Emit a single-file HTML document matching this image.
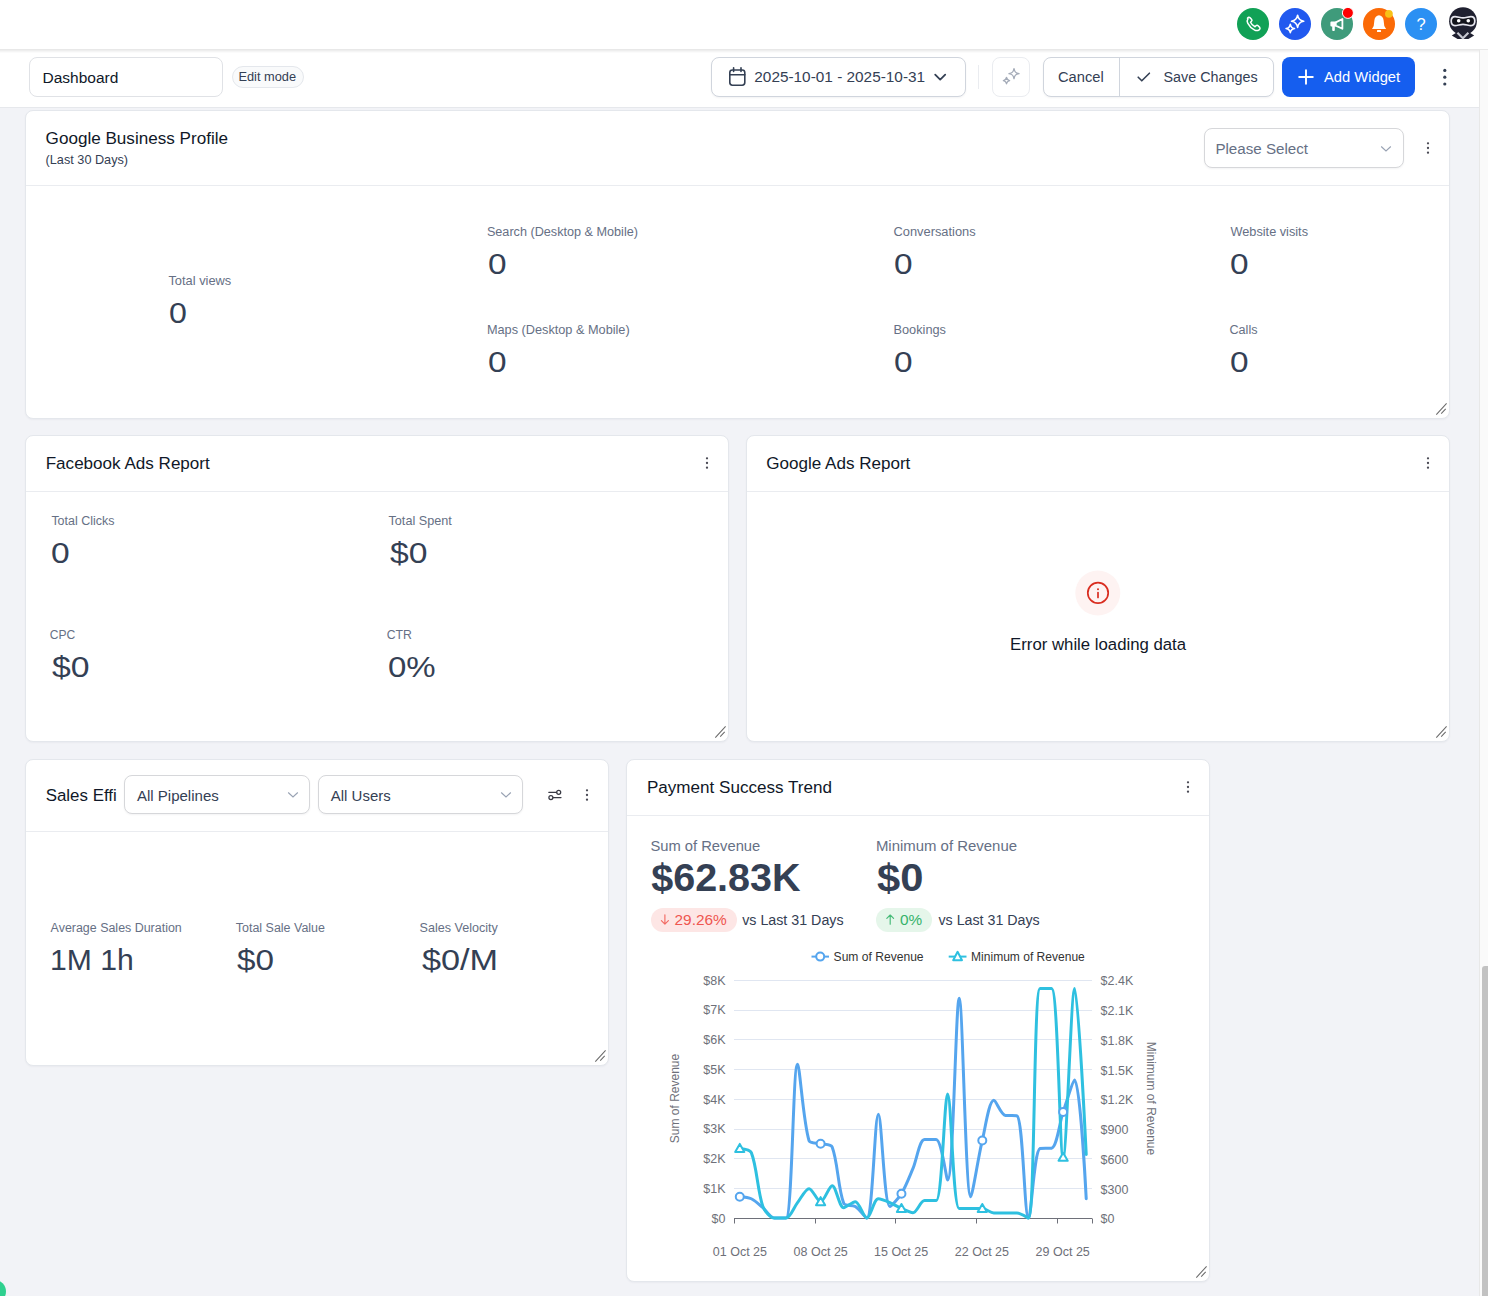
<!DOCTYPE html>
<html><head><meta charset="utf-8"><title>Dashboard</title>
<style>
html,body{margin:0;padding:0;}
body{width:1488px;height:1296px;overflow:hidden;position:relative;background:#f2f3f7;font-family:"Liberation Sans",sans-serif;}
.r{position:absolute;}
.t{position:absolute;white-space:nowrap;line-height:1;}
svg.r{overflow:visible;}
</style></head><body>
<div class="r" style="left:0px;top:0px;width:1488px;height:49px;background:#fff;"></div>
<div class="r" style="left:0px;top:49px;width:1488px;height:1px;background:#e8e8e8;"></div>
<div class="r" style="left:0px;top:50px;width:1479px;height:57px;background:#fff;"></div>
<div class="r" style="left:0px;top:50px;width:1479px;height:1px;background:#eeeeee;"></div>
<div class="r" style="left:0px;top:51px;width:1479px;height:1px;background:#f5f5f5;"></div>
<div class="r" style="left:0px;top:52px;width:1479px;height:1px;background:#fbfbfb;"></div>
<div class="r" style="left:0px;top:107px;width:1479px;height:1px;background:#e6e8ec;"></div>
<div class="r" style="left:1479px;top:50px;width:9px;height:1246px;background:#fafafa;border-left:1px solid #e8e8e8;box-sizing:border-box;"></div>
<div class="r" style="left:1482px;top:966px;width:6px;height:330px;background:#c2c2c2;border-radius:3px 0 0 0;"></div>
<div class="r" style="left:1237px;top:8px;width:32px;height:32px;border-radius:50%;background:#11a156;"></div>
<div class="r" style="left:1279px;top:8px;width:32px;height:32px;border-radius:50%;background:#2159ef;"></div>
<div class="r" style="left:1321px;top:8px;width:32px;height:32px;border-radius:50%;background:#3f9b7b;"></div>
<div class="r" style="left:1363px;top:8px;width:32px;height:32px;border-radius:50%;background:#fb6a07;"></div>
<div class="r" style="left:1405px;top:8px;width:32px;height:32px;border-radius:50%;background:#2b90f3;"></div>
<svg class="r" style="left:0;top:0" width="1488" height="50" viewBox="0 0 1488 50">
<path d="M1247.5,18.2c0.6-0.9 1.7-1.2 2.4-0.6l1.6,1.6c0.6,0.6 0.6,1.5 0,2.1l-1,1c0.9,1.9 2.5,3.6 4.5,4.5l1-1c0.6-0.6 1.5-0.6 2.1,0l1.6,1.6c0.6,0.7 0.3,1.8-0.6,2.4c-1.3,0.9-3,1-4.4,0.3c-3-1.5-5.5-4-7-7c-0.7-1.4-0.6-3.1 0.3-4.4z" fill="none" stroke="#fff" stroke-width="1.5" stroke-linejoin="round"/>
<path d="M1297.6,15.20 Q1298.45,20.45 1303.70,21.3 Q1298.45,22.15 1297.6,27.40 Q1296.75,22.15 1291.50,21.3 Q1296.75,20.45 1297.6,15.20Z" fill="none" stroke="#fff" stroke-width="1.6" stroke-linejoin="round"/>
<path d="M1290.3,24.30 Q1290.89,27.91 1294.50,28.5 Q1290.89,29.09 1290.3,32.70 Q1289.71,29.09 1286.10,28.5 Q1289.71,27.91 1290.3,24.30Z" fill="none" stroke="#fff" stroke-width="1.6" stroke-linejoin="round"/>
<path d="M1331.4,21.6 h4.4 v4.8 h-4.4 a1,1 0 0 1 -1,-1 v-2.8 a1,1 0 0 1 1,-1z" fill="#fff"/>
<path d="M1332.2,26 h2.6 v4 a0.9,0.9 0 0 1 -0.9,0.9 h-0.8 a0.9,0.9 0 0 1 -0.9,-0.9z" fill="#fff"/>
<path d="M1335.8,22.4 L1342.4,19 V28.8 L1335.8,25.6Z" fill="none" stroke="#fff" stroke-width="1.8" stroke-linejoin="round"/>
<circle cx="1347.9" cy="12.9" r="5.5" fill="#f00" stroke="#fff" stroke-width="1"/>
<path d="M1379,15.2 C1376.6,15.5 1374.7,17.4 1374.4,20.3 L1373.7,26 L1372,29.1 H1386.1 L1384.3,26 L1383.6,20.3 C1383.3,17.4 1381.4,15.5 1379,15.2Z" fill="#fff"/>
<rect x="1377" y="30.1" width="4" height="1.9" rx="0.6" fill="#fff"/>
<circle cx="1388.9" cy="13.8" r="3.9" fill="#f8c116"/>
<text x="1421" y="29.6" text-anchor="middle" font-family="Liberation Sans" font-weight="400" font-size="16.5" fill="#fff">?</text>
<circle cx="1463" cy="21.2" r="13.9" fill="#1f2030"/>
<path d="M1451.8,35.6 L1456.6,32.4 H1469.4 L1474.2,35.6 L1468.4,38.9 H1457.6Z" fill="#1f2030"/>
<path d="M1457.4,32.8 L1462.9,38.2 L1468.4,32.8" fill="none" stroke="#c5c6cf" stroke-width="2.2" stroke-linejoin="round"/>
<path d="M1455,16.6 C1457.6,16.6 1460.2,17.9 1463,17.9 C1465.8,17.9 1468.4,16.6 1471,16.6 C1473.6,16.6 1474.8,18.6 1474.8,21.1 C1474.8,23.6 1473.6,25.6 1471,25.6 C1468.4,25.6 1465.8,24.3 1463,24.3 C1460.2,24.3 1457.6,25.6 1455,25.6 C1452.4,25.6 1451.2,23.6 1451.2,21.1 C1451.2,18.6 1452.4,16.6 1455,16.6Z" fill="#12131b" stroke="#e6e6ee" stroke-width="1.7"/>
<circle cx="1458.7" cy="20.8" r="1.8" fill="#fff"/>
<circle cx="1468.3" cy="20.8" r="1.8" fill="#fff"/>
</svg>
<div class="r" style="left:29px;top:57px;width:194px;height:40px;border:1px solid #e0e2e6;border-radius:8px;box-sizing:border-box;background:#fff;"></div>
<div class="t" style="left:42.5px;top:70px;font-size:15.5px;color:#101828;">Dashboard</div>
<div class="r" style="left:232px;top:66px;width:72px;height:22px;border:1px solid #e4e7ec;border-radius:12px;box-sizing:border-box;background:#f9fafb;"></div>
<div class="t" style="left:238.4px;top:71px;font-size:12.8px;color:#344054;">Edit mode</div>
<div class="r" style="left:711px;top:57px;width:255px;height:40px;border:1px solid #d0d5dd;border-radius:8px;box-sizing:border-box;background:#fff;box-shadow:0 1px 2px rgba(16,24,40,.05);"></div>
<div class="t" style="left:754.3px;top:69px;font-size:15.36px;color:#344054;">2025-10-01 - 2025-10-31</div>
<div class="r" style="left:978px;top:65px;width:1px;height:24px;background:#eaecf0;"></div>
<div class="r" style="left:992px;top:57px;width:38px;height:40px;border:1px solid #eaecf0;border-radius:8px;box-sizing:border-box;background:#fff;"></div>
<div class="r" style="left:1043px;top:57px;width:231px;height:40px;border:1px solid #d0d5dd;border-radius:8px;box-sizing:border-box;background:#fff;box-shadow:0 1px 2px rgba(16,24,40,.05);"></div>
<div class="r" style="left:1119px;top:57px;width:1px;height:40px;background:#d0d5dd;"></div>
<div class="t" style="left:1058.0px;top:70px;font-size:14.69px;color:#344054;">Cancel</div>
<div class="t" style="left:1163.5px;top:70px;font-size:14.35px;color:#344054;">Save Changes</div>
<div class="r" style="left:1282px;top:57px;width:133px;height:40px;background:#155eef;border-radius:8px;"></div>
<div class="t" style="left:1324.0px;top:70px;font-size:14.73px;color:#ffffff;">Add Widget</div>
<svg class="r" style="left:0;top:50px" width="1488" height="57" viewBox="0 50 1488 57">
<rect x="729.8" y="70" width="15" height="15.2" rx="2.6" fill="none" stroke="#344054" stroke-width="1.6"/>
<path d="M729.8,74.8 h15 M733.6,67.8 v3.6 M741,67.8 v3.6" stroke="#344054" stroke-width="1.6" stroke-linecap="round"/>
<path d="M935.2,74.6 l5,5 l5,-5" fill="none" stroke="#344054" stroke-width="1.8" stroke-linecap="round" stroke-linejoin="round"/>
<path d="M1014,68.6 C1014.6,72 1015.6,73 1019,73.6 C1015.6,74.2 1014.6,75.2 1014,78.6 C1013.4,75.2 1012.4,74.2 1009,73.6 C1012.4,73 1013.4,72 1014,68.6Z" fill="none" stroke="#a4abb8" stroke-width="1.4" stroke-linejoin="round"/>
<path d="M1006.5,77.5 C1006.9,79.6 1007.5,80.2 1009.6,80.6 C1007.5,81 1006.9,81.6 1006.5,83.7 C1006.1,81.6 1005.5,81 1003.4,80.6 C1005.5,80.2 1006.1,79.6 1006.5,77.5Z" fill="none" stroke="#a4abb8" stroke-width="1.4" stroke-linejoin="round"/>
<path d="M1138.2,77.2 l3.6,3.6 l7.6,-7.6" fill="none" stroke="#344054" stroke-width="1.6" stroke-linecap="round" stroke-linejoin="round"/>
<path d="M1306,70.2 v13.6 M1299.2,77 h13.6" stroke="#fff" stroke-width="1.9" stroke-linecap="round"/>
<circle cx="1444.8" cy="70.4" r="1.6" fill="#344054"/><circle cx="1444.8" cy="77.2" r="1.6" fill="#344054"/><circle cx="1444.8" cy="84" r="1.6" fill="#344054"/>
</svg>
<div class="r" style="left:25px;top:110px;width:1425px;height:309px;background:#fff;border:1px solid #e4e7ec;border-radius:8px;box-sizing:border-box;box-shadow:0 1px 2px rgba(16,24,40,.04);"></div>
<div class="r" style="left:26px;top:185px;width:1423px;height:1px;background:#eaecf0;"></div>
<svg class="r" style="left:1434px;top:403px" width="14" height="14" viewBox="0 0 14 14"><path d="M2.3,11.6 L12.6,0.3 M7.2,10.7 L11.7,5.9" stroke="#6b6b6b" stroke-width="1.05" /></svg>
<div class="t" style="left:45.6px;top:130px;font-size:17.1px;color:#101828;">Google Business Profile</div>
<div class="t" style="left:45.6px;top:154px;font-size:12.7px;color:#344054;">(Last 30 Days)</div>
<div class="r" style="left:1204px;top:128px;width:200px;height:40px;border:1px solid #d6d7da;border-radius:8px;box-sizing:border-box;background:#fff;box-shadow:0 1px 2px rgba(16,24,40,.05);"></div>
<div class="t" style="left:1215.4px;top:141px;font-size:15.17px;color:#667085;">Please Select</div>
<svg class="r" style="left:1380.3px;top:144.5px" width="12" height="8" viewBox="0 0 12 8"><path d="M1.2,1.5 L6,6 L10.8,1.5" fill="none" stroke="#98a2b3" stroke-width="1.1"/></svg>
<svg class="r" style="left:1423.7px;top:138.3px" width="8" height="20" viewBox="0 0 8 20"><circle cx="4" cy="5.35" r="1.15" fill="#4a4a55"/><circle cx="4" cy="10.00" r="1.15" fill="#4a4a55"/><circle cx="4" cy="14.65" r="1.15" fill="#4a4a55"/></svg>
<div class="t" style="left:168.4px;top:275px;font-size:12.87px;color:#667085;">Total views</div>
<div class="t" style="left:168.8px;top:299px;font-size:29px;color:#344054;transform:scaleX(1.1071);transform-origin:0 0;">0</div>
<div class="t" style="left:486.9px;top:226px;font-size:12.65px;color:#667085;">Search (Desktop &amp; Mobile)</div>
<div class="t" style="left:487.6px;top:250px;font-size:29px;color:#344054;transform:scaleX(1.1500);transform-origin:0 0;">0</div>
<div class="t" style="left:486.9px;top:324px;font-size:12.72px;color:#667085;">Maps (Desktop &amp; Mobile)</div>
<div class="t" style="left:487.6px;top:348px;font-size:29px;color:#344054;transform:scaleX(1.1500);transform-origin:0 0;">0</div>
<div class="t" style="left:893.5px;top:226px;font-size:12.85px;color:#667085;">Conversations</div>
<div class="t" style="left:894.4px;top:250px;font-size:29px;color:#344054;transform:scaleX(1.1500);transform-origin:0 0;">0</div>
<div class="t" style="left:893.5px;top:324px;font-size:12.75px;color:#667085;">Bookings</div>
<div class="t" style="left:894.4px;top:348px;font-size:29px;color:#344054;transform:scaleX(1.1500);transform-origin:0 0;">0</div>
<div class="t" style="left:1230.5px;top:226px;font-size:12.72px;color:#667085;">Website visits</div>
<div class="t" style="left:1230.3px;top:250px;font-size:29px;color:#344054;transform:scaleX(1.1500);transform-origin:0 0;">0</div>
<div class="t" style="left:1229.5px;top:324px;font-size:12.62px;color:#667085;">Calls</div>
<div class="t" style="left:1230.3px;top:348px;font-size:29px;color:#344054;transform:scaleX(1.1500);transform-origin:0 0;">0</div>
<div class="r" style="left:25px;top:435px;width:704px;height:307px;background:#fff;border:1px solid #e4e7ec;border-radius:8px;box-sizing:border-box;box-shadow:0 1px 2px rgba(16,24,40,.04);"></div>
<div class="r" style="left:26px;top:491px;width:702px;height:1px;background:#eaecf0;"></div>
<svg class="r" style="left:713px;top:726px" width="14" height="14" viewBox="0 0 14 14"><path d="M2.3,11.6 L12.6,0.3 M7.2,10.7 L11.7,5.9" stroke="#6b6b6b" stroke-width="1.05" /></svg>
<div class="t" style="left:45.7px;top:455px;font-size:17.07px;color:#101828;">Facebook Ads Report</div>
<svg class="r" style="left:703px;top:453px" width="8" height="20" viewBox="0 0 8 20"><circle cx="4" cy="5.35" r="1.15" fill="#4a4a55"/><circle cx="4" cy="10.00" r="1.15" fill="#4a4a55"/><circle cx="4" cy="14.65" r="1.15" fill="#4a4a55"/></svg>
<div class="t" style="left:51.4px;top:515px;font-size:12.48px;color:#667085;">Total Clicks</div>
<div class="t" style="left:50.6px;top:539px;font-size:29px;color:#344054;transform:scaleX(1.1571);transform-origin:0 0;">0</div>
<div class="t" style="left:388.5px;top:515px;font-size:12.66px;color:#667085;">Total Spent</div>
<div class="t" style="left:389.5px;top:539px;font-size:29px;color:#344054;transform:scaleX(1.1613);transform-origin:0 0;">$0</div>
<div class="t" style="left:49.7px;top:629px;font-size:12.06px;color:#667085;">CPC</div>
<div class="t" style="left:51.9px;top:653px;font-size:29px;color:#344054;transform:scaleX(1.1645);transform-origin:0 0;">$0</div>
<div class="t" style="left:386.7px;top:629px;font-size:12.25px;color:#667085;">CTR</div>
<div class="t" style="left:388.0px;top:653px;font-size:29px;color:#344054;transform:scaleX(1.1375);transform-origin:0 0;">0%</div>
<div class="r" style="left:746px;top:435px;width:704px;height:307px;background:#fff;border:1px solid #e4e7ec;border-radius:8px;box-sizing:border-box;box-shadow:0 1px 2px rgba(16,24,40,.04);"></div>
<div class="r" style="left:747px;top:491px;width:702px;height:1px;background:#eaecf0;"></div>
<svg class="r" style="left:1434px;top:726px" width="14" height="14" viewBox="0 0 14 14"><path d="M2.3,11.6 L12.6,0.3 M7.2,10.7 L11.7,5.9" stroke="#6b6b6b" stroke-width="1.05" /></svg>
<div class="t" style="left:766.2px;top:455px;font-size:17.07px;color:#101828;">Google Ads Report</div>
<svg class="r" style="left:1424px;top:453px" width="8" height="20" viewBox="0 0 8 20"><circle cx="4" cy="5.35" r="1.15" fill="#4a4a55"/><circle cx="4" cy="10.00" r="1.15" fill="#4a4a55"/><circle cx="4" cy="14.65" r="1.15" fill="#4a4a55"/></svg>
<svg class="r" style="left:1070px;top:565px" width="56" height="56" viewBox="1070 565 56 56">
<circle cx="1097.8" cy="593" r="22.5" fill="#fef3f2"/>
<circle cx="1098" cy="592.9" r="10.2" fill="none" stroke="#d92d20" stroke-width="1.7"/>
<path d="M1098,592.6 v4.8" stroke="#d92d20" stroke-width="1.7" stroke-linecap="round"/>
<circle cx="1098" cy="589.2" r="1" fill="#d92d20"/>
</svg>
<div class="t" style="left:1010.1px;top:637px;font-size:16.75px;color:#101828;">Error while loading data</div>
<div class="r" style="left:25px;top:759px;width:584px;height:307px;background:#fff;border:1px solid #e4e7ec;border-radius:8px;box-sizing:border-box;box-shadow:0 1px 2px rgba(16,24,40,.04);"></div>
<div class="r" style="left:26px;top:831px;width:582px;height:1px;background:#eaecf0;"></div>
<svg class="r" style="left:593px;top:1050px" width="14" height="14" viewBox="0 0 14 14"><path d="M2.3,11.6 L12.6,0.3 M7.2,10.7 L11.7,5.9" stroke="#6b6b6b" stroke-width="1.05" /></svg>
<div class="t" style="left:45.7px;top:788px;font-size:16.9px;color:#101828;">Sales Effi</div>
<div class="r" style="left:124px;top:775px;width:186px;height:39px;border:1px solid #d6d7da;border-radius:8px;box-sizing:border-box;background:#fff;box-shadow:0 1px 2px rgba(16,24,40,.05);"></div>
<div class="t" style="left:136.9px;top:788px;font-size:15.04px;color:#344054;">All Pipelines</div>
<svg class="r" style="left:286.9px;top:791.3px" width="12" height="8" viewBox="0 0 12 8"><path d="M1.2,1.5 L6,6 L10.8,1.5" fill="none" stroke="#98a2b3" stroke-width="1.1"/></svg>
<div class="r" style="left:318px;top:775px;width:205px;height:39px;border:1px solid #d6d7da;border-radius:8px;box-sizing:border-box;background:#fff;box-shadow:0 1px 2px rgba(16,24,40,.05);"></div>
<div class="t" style="left:330.8px;top:788px;font-size:14.98px;color:#344054;">All Users</div>
<svg class="r" style="left:499.6px;top:791.3px" width="12" height="8" viewBox="0 0 12 8"><path d="M1.2,1.5 L6,6 L10.8,1.5" fill="none" stroke="#98a2b3" stroke-width="1.1"/></svg>
<svg class="r" style="left:545px;top:786px" width="20" height="18" viewBox="545 786 20 18">
<path d="M548.8,792.3 h7.8 M561,797.5 h-7.9" stroke="#3a3b45" stroke-width="1.25" stroke-linecap="round"/>
<circle cx="558.7" cy="792.3" r="2" fill="none" stroke="#3a3b45" stroke-width="1.25"/>
<circle cx="550.9" cy="797.5" r="2" fill="none" stroke="#3a3b45" stroke-width="1.25"/>
</svg>
<svg class="r" style="left:583.2px;top:785.2px" width="8" height="20" viewBox="0 0 8 20"><circle cx="4" cy="5.35" r="1.15" fill="#4a4a55"/><circle cx="4" cy="10.00" r="1.15" fill="#4a4a55"/><circle cx="4" cy="14.65" r="1.15" fill="#4a4a55"/></svg>
<div class="t" style="left:50.6px;top:922px;font-size:12.44px;color:#667085;">Average Sales Duration</div>
<div class="t" style="left:49.8px;top:946px;font-size:29px;color:#344054;transform:scaleX(1.0390);transform-origin:0 0;">1M 1h</div>
<div class="t" style="left:235.8px;top:922px;font-size:12.48px;color:#667085;">Total Sale Value</div>
<div class="t" style="left:236.8px;top:946px;font-size:29px;color:#344054;transform:scaleX(1.1452);transform-origin:0 0;">$0</div>
<div class="t" style="left:419.6px;top:922px;font-size:12.59px;color:#667085;">Sales Velocity</div>
<div class="t" style="left:421.6px;top:946px;font-size:29px;color:#344054;transform:scaleX(1.1806);transform-origin:0 0;">$0/M</div>
<div class="r" style="left:626px;top:759px;width:584px;height:523px;background:#fff;border:1px solid #e4e7ec;border-radius:8px;box-sizing:border-box;box-shadow:0 1px 2px rgba(16,24,40,.04);"></div>
<div class="r" style="left:627px;top:815px;width:582px;height:1px;background:#eaecf0;"></div>
<svg class="r" style="left:1194px;top:1266px" width="14" height="14" viewBox="0 0 14 14"><path d="M2.3,11.6 L12.6,0.3 M7.2,10.7 L11.7,5.9" stroke="#6b6b6b" stroke-width="1.05" /></svg>
<div class="t" style="left:646.9px;top:779px;font-size:17.09px;color:#101828;">Payment Success Trend</div>
<svg class="r" style="left:1184px;top:777px" width="8" height="20" viewBox="0 0 8 20"><circle cx="4" cy="5.35" r="1.15" fill="#4a4a55"/><circle cx="4" cy="10.00" r="1.15" fill="#4a4a55"/><circle cx="4" cy="14.65" r="1.15" fill="#4a4a55"/></svg>
<div class="t" style="left:650.4px;top:839px;font-size:14.75px;color:#667085;">Sum of Revenue</div>
<div class="t" style="left:651.2px;top:858px;font-size:39.52px;color:#344054;font-weight:700;">$62.83K</div>
<div class="r" style="left:651px;top:908px;width:86px;height:24px;background:#fde6e5;border-radius:12px;"></div>
<div class="t" style="left:674.5px;top:912px;font-size:15.41px;color:#ef5650;">29.26%</div>
<svg class="r" style="left:658px;top:912px" width="14" height="16" viewBox="658 912 14 16"><path d="M664.9,914.8 v9.2 M661.4,920.6 l3.5,3.5 l3.5,-3.5" fill="none" stroke="#f26a63" stroke-width="1.15" stroke-linecap="round" stroke-linejoin="round"/></svg>
<div class="t" style="left:742.2px;top:913px;font-size:14.25px;color:#344054;">vs Last 31 Days</div>
<div class="t" style="left:875.9px;top:839px;font-size:14.94px;color:#667085;">Minimum of Revenue</div>
<div class="t" style="left:877.1px;top:859px;font-size:38px;color:#344054;font-weight:700;transform:scaleX(1.0975);transform-origin:0 0;">$0</div>
<div class="r" style="left:876px;top:908px;width:56px;height:24px;background:#e5f6ea;border-radius:12px;"></div>
<div class="t" style="left:900.1px;top:912px;font-size:15.33px;color:#36b36a;">0%</div>
<svg class="r" style="left:883px;top:912px" width="14" height="16" viewBox="883 912 14 16"><path d="M890.2,924.2 v-9 M886.8,918.4 l3.4,-3.4 l3.4,3.4" fill="none" stroke="#47bb78" stroke-width="1.15" stroke-linecap="round" stroke-linejoin="round"/></svg>
<div class="t" style="left:938.5px;top:913px;font-size:14.22px;color:#344054;">vs Last 31 Days</div>
<svg class="r" style="left:626px;top:940px" width="584" height="330" viewBox="626 940 584 330"><path d="M734,1188.50 H1092" stroke="#e0e6f1" stroke-width="1"/><path d="M734,1158.50 H1092" stroke="#e0e6f1" stroke-width="1"/><path d="M734,1129.50 H1092" stroke="#e0e6f1" stroke-width="1"/><path d="M734,1099.50 H1092" stroke="#e0e6f1" stroke-width="1"/><path d="M734,1069.50 H1092" stroke="#e0e6f1" stroke-width="1"/><path d="M734,1039.50 H1092" stroke="#e0e6f1" stroke-width="1"/><path d="M734,1010.50 H1092" stroke="#e0e6f1" stroke-width="1"/><path d="M734,980.50 H1092" stroke="#e0e6f1" stroke-width="1"/><path d="M734,1218.50 H1092" stroke="#6e7079" stroke-width="1"/><path d="M734.50,1218.50 V1223.50" stroke="#6e7079" stroke-width="1"/><path d="M815.50,1218.50 V1223.50" stroke="#6e7079" stroke-width="1"/><path d="M895.50,1218.50 V1223.50" stroke="#6e7079" stroke-width="1"/><path d="M976.50,1218.50 V1223.50" stroke="#6e7079" stroke-width="1"/><path d="M1057.50,1218.50 V1223.50" stroke="#6e7079" stroke-width="1"/><path d="M1092.50,1218.50 V1223.50" stroke="#6e7079" stroke-width="1"/><path d="M739.77,1196.68 C739.77,1196.68 748.23,1197.29 751.32,1198.76 C755.16,1200.59 759.52,1204.88 762.87,1207.69 C766.45,1210.68 770.44,1218.10 774.42,1218.10 C777.37,1218.10 785.49,1218.10 785.97,1218.10 C792.41,1218.10 792.90,1064.29 797.52,1064.29 C799.83,1064.29 803.06,1121.46 809.06,1140.75 C809.99,1143.72 817.16,1142.79 820.61,1143.72 C824.09,1144.67 830.96,1143.91 832.16,1147.00 C837.89,1161.76 837.98,1188.46 843.71,1203.22 C844.91,1206.31 852.33,1204.61 855.26,1206.50 C859.26,1209.07 865.87,1218.10 866.81,1218.10 C872.80,1218.10 874.69,1114.27 878.35,1114.27 C881.62,1114.27 884.06,1206.50 889.90,1206.50 C890.99,1206.50 898.80,1198.08 901.45,1193.70 C905.73,1186.65 909.73,1176.09 913.00,1168.42 C916.66,1159.84 919.50,1139.56 924.55,1139.56 C926.43,1139.56 934.60,1139.56 936.10,1139.56 C941.53,1139.56 946.34,1180.02 947.65,1180.02 C953.27,1180.02 955.88,998.25 959.19,998.25 C962.81,998.25 965.37,1196.68 970.74,1196.68 C972.29,1196.68 978.28,1157.19 982.29,1140.45 C985.21,1128.27 989.08,1100.29 993.84,1100.29 C996.01,1100.29 1001.07,1114.97 1005.39,1115.46 C1008.00,1115.76 1016.24,1115.46 1016.94,1115.76 C1023.17,1118.41 1024.37,1218.10 1028.48,1218.10 C1031.30,1218.10 1034.08,1150.30 1040.03,1148.48 C1041.01,1148.19 1049.97,1148.48 1051.58,1148.19 C1056.90,1147.21 1059.46,1122.71 1063.13,1111.89 C1066.39,1102.27 1073.15,1080.06 1074.68,1080.06 C1080.07,1080.06 1086.23,1198.76 1086.23,1198.76" fill="none" stroke="#55a5ee" stroke-width="3" stroke-linejoin="round" stroke-linecap="round"/><path d="M739.77,1148.48 C739.77,1148.48 750.06,1149.48 751.32,1152.65 C756.99,1166.88 757.53,1191.36 762.87,1206.50 C764.46,1211.00 770.36,1218.10 774.42,1218.10 C777.29,1218.10 783.37,1218.10 785.97,1218.10 C790.30,1218.10 793.94,1207.19 797.52,1202.63 C800.87,1198.35 805.53,1188.65 809.06,1188.65 C812.46,1188.65 817.37,1201.74 820.61,1201.74 C824.29,1201.74 829.09,1185.67 832.16,1185.67 C836.02,1185.67 839.16,1207.69 843.71,1207.69 C846.09,1207.69 852.53,1201.74 855.26,1201.74 C859.46,1201.74 863.55,1218.10 866.81,1218.10 C870.47,1218.10 873.86,1198.76 878.35,1198.76 C880.79,1198.76 886.55,1201.20 889.90,1202.63 C893.48,1204.15 897.89,1207.02 901.45,1208.58 C904.82,1210.05 910.07,1212.74 913.00,1212.74 C917.00,1212.74 920.44,1200.55 924.55,1200.55 C927.37,1200.55 935.42,1200.55 936.10,1200.55 C942.35,1200.55 944.31,1094.04 947.65,1094.04 C951.23,1094.04 952.90,1208.58 959.19,1208.58 C959.83,1208.58 967.28,1208.58 970.74,1208.58 C974.21,1208.58 978.95,1208.58 982.29,1208.58 C985.88,1208.58 990.25,1213.04 993.84,1213.04 C997.18,1213.04 1001.92,1213.04 1005.39,1213.04 C1008.85,1213.04 1013.62,1213.04 1016.94,1213.04 C1020.55,1213.04 1028.12,1218.10 1028.48,1218.10 C1035.05,1218.10 1033.43,988.43 1040.03,988.43 C1040.36,988.43 1051.14,988.43 1051.58,988.43 C1058.07,988.43 1059.66,1157.41 1063.13,1157.41 C1066.59,1157.41 1071.18,988.43 1074.68,988.43 C1078.11,988.43 1086.23,1154.43 1086.23,1154.43" fill="none" stroke="#2ec0e0" stroke-width="3" stroke-linejoin="round" stroke-linecap="round"/><circle cx="739.77" cy="1196.68" r="4" fill="#fff" stroke="#55a5ee" stroke-width="2"/><circle cx="820.61" cy="1143.72" r="4" fill="#fff" stroke="#55a5ee" stroke-width="2"/><circle cx="901.45" cy="1193.7" r="4" fill="#fff" stroke="#55a5ee" stroke-width="2"/><circle cx="982.29" cy="1140.45" r="4" fill="#fff" stroke="#55a5ee" stroke-width="2"/><circle cx="1063.13" cy="1111.89" r="4" fill="#fff" stroke="#55a5ee" stroke-width="2"/><path d="M739.77,1143.88 L744.37,1151.88 L735.17,1151.88Z" fill="#fff" stroke="#2ec0e0" stroke-width="2" stroke-linejoin="round"/><path d="M820.61,1197.14 L825.21,1205.14 L816.01,1205.14Z" fill="#fff" stroke="#2ec0e0" stroke-width="2" stroke-linejoin="round"/><path d="M901.45,1203.98 L906.05,1211.98 L896.85,1211.98Z" fill="#fff" stroke="#2ec0e0" stroke-width="2" stroke-linejoin="round"/><path d="M982.29,1203.98 L986.89,1211.98 L977.69,1211.98Z" fill="#fff" stroke="#2ec0e0" stroke-width="2" stroke-linejoin="round"/><path d="M1063.13,1152.81 L1067.73,1160.81 L1058.53,1160.81Z" fill="#fff" stroke="#2ec0e0" stroke-width="2" stroke-linejoin="round"/><path d="M811.5,956.6 h17.5" stroke="#55a5ee" stroke-width="2"/><circle cx="820.2" cy="956.6" r="4" fill="#fff" stroke="#55a5ee" stroke-width="2"/><path d="M948.7,956.6 h17.8" stroke="#2ec0e0" stroke-width="2"/><path d="M957.6,951.8 L962,960.2 L953.2,960.2Z" fill="#fff" stroke="#2ec0e0" stroke-width="2" stroke-linejoin="round"/></svg>
<div class="t" style="left:833.6px;top:951px;font-size:12.09px;color:#333333;">Sum of Revenue</div>
<div class="t" style="left:971.1px;top:951px;font-size:12.04px;color:#333333;">Minimum of Revenue</div>
<div class="t" style="left:600px;width:125.5px;text-align:right;top:1212.60px;font-size:12.5px;line-height:13px;color:#6e7079;">$0</div>
<div class="t" style="left:1100.6px;top:1213px;font-size:12.5px;color:#6e7079;">$0</div>
<div class="t" style="left:600px;width:125.5px;text-align:right;top:1182.85px;font-size:12.5px;line-height:13px;color:#6e7079;">$1K</div>
<div class="t" style="left:1100.6px;top:1184px;font-size:12.5px;color:#6e7079;">$300</div>
<div class="t" style="left:600px;width:125.5px;text-align:right;top:1153.10px;font-size:12.5px;line-height:13px;color:#6e7079;">$2K</div>
<div class="t" style="left:1100.6px;top:1154px;font-size:12.5px;color:#6e7079;">$600</div>
<div class="t" style="left:600px;width:125.5px;text-align:right;top:1123.35px;font-size:12.5px;line-height:13px;color:#6e7079;">$3K</div>
<div class="t" style="left:1100.6px;top:1124px;font-size:12.5px;color:#6e7079;">$900</div>
<div class="t" style="left:600px;width:125.5px;text-align:right;top:1093.60px;font-size:12.5px;line-height:13px;color:#6e7079;">$4K</div>
<div class="t" style="left:1100.6px;top:1094px;font-size:12.5px;color:#6e7079;">$1.2K</div>
<div class="t" style="left:600px;width:125.5px;text-align:right;top:1063.85px;font-size:12.5px;line-height:13px;color:#6e7079;">$5K</div>
<div class="t" style="left:1100.6px;top:1065px;font-size:12.5px;color:#6e7079;">$1.5K</div>
<div class="t" style="left:600px;width:125.5px;text-align:right;top:1034.10px;font-size:12.5px;line-height:13px;color:#6e7079;">$6K</div>
<div class="t" style="left:1100.6px;top:1035px;font-size:12.5px;color:#6e7079;">$1.8K</div>
<div class="t" style="left:600px;width:125.5px;text-align:right;top:1004.35px;font-size:12.5px;line-height:13px;color:#6e7079;">$7K</div>
<div class="t" style="left:1100.6px;top:1005px;font-size:12.5px;color:#6e7079;">$2.1K</div>
<div class="t" style="left:600px;width:125.5px;text-align:right;top:974.60px;font-size:12.5px;line-height:13px;color:#6e7079;">$8K</div>
<div class="t" style="left:1100.6px;top:975px;font-size:12.5px;color:#6e7079;">$2.4K</div>
<div class="t" style="left:712.8px;top:1246px;font-size:12.5px;color:#6e7079;">01 Oct 25</div>
<div class="t" style="left:793.6px;top:1246px;font-size:12.5px;color:#6e7079;">08 Oct 25</div>
<div class="t" style="left:874.0px;top:1246px;font-size:12.5px;color:#6e7079;">15 Oct 25</div>
<div class="t" style="left:954.8px;top:1246px;font-size:12.5px;color:#6e7079;">22 Oct 25</div>
<div class="t" style="left:1035.6px;top:1246px;font-size:12.5px;color:#6e7079;">29 Oct 25</div>
<div class="t" style="left:574.8px;top:1092.4px;width:200px;text-align:center;font-size:12px;line-height:13px;color:#6e7079;transform:rotate(-90deg);">Sum of Revenue</div>
<div class="t" style="left:1049.6px;top:1091.9px;width:200px;text-align:center;font-size:12px;line-height:13px;color:#6e7079;transform:rotate(90deg);">Minimum of Revenue</div>
<div class="r" style="left:-17.5px;top:1279.5px;width:23px;height:23px;border-radius:50%;background:#2fd08f;"></div>
</body></html>
